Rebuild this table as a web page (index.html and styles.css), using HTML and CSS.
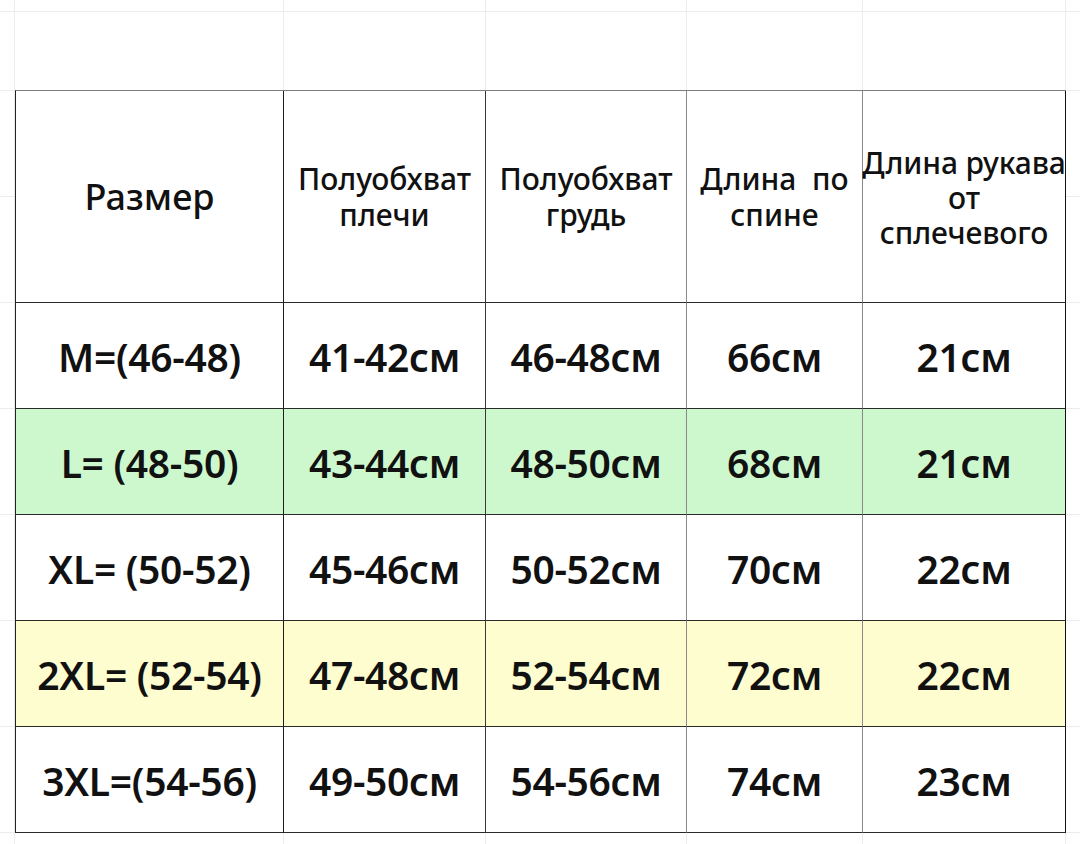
FILE: index.html
```html
<!DOCTYPE html>
<html lang="ru">
<head>
<meta charset="utf-8">
<title>Таблица размеров</title>
<link rel="stylesheet" href="styles.css">
</head>
<body>
<div class="sheet">
  <div class="size-table" role="table">
    <div class="cell head c1" role="columnheader"><span class="head-main">Размер</span></div>
    <div class="cell head c2" role="columnheader"><span>Полуобхват<br>плечи</span></div>
    <div class="cell head c3" role="columnheader"><span>Полуобхват<br>грудь</span></div>
    <div class="cell head c4" role="columnheader"><span>Длина&nbsp; по<br>спине</span></div>
    <div class="cell head c5" role="columnheader"><span class="head-tight">Длина рукава<br>от<br>сплечевого</span></div>

    <div class="cell c1">M=(46-48)</div>
    <div class="cell c2">41-42см</div>
    <div class="cell c3">46-48см</div>
    <div class="cell c4">66см</div>
    <div class="cell c5">21см</div>

    <div class="cell c1 green">L= (48-50)</div>
    <div class="cell c2 green">43-44см</div>
    <div class="cell c3 green">48-50см</div>
    <div class="cell c4 green">68см</div>
    <div class="cell c5 green">21см</div>

    <div class="cell c1">XL= (50-52)</div>
    <div class="cell c2">45-46см</div>
    <div class="cell c3">50-52см</div>
    <div class="cell c4">70см</div>
    <div class="cell c5">22см</div>

    <div class="cell c1 yellow">2XL= (52-54)</div>
    <div class="cell c2 yellow">47-48см</div>
    <div class="cell c3 yellow">52-54см</div>
    <div class="cell c4 yellow">72см</div>
    <div class="cell c5 yellow">22см</div>

    <div class="cell c1">3XL=(54-56)</div>
    <div class="cell c2">49-50см</div>
    <div class="cell c3">54-56см</div>
    <div class="cell c4">74см</div>
    <div class="cell c5">23см</div>
  </div>
</div>
</body>
</html>
```
FILE: styles.css
```css
html, body {
  margin: 0;
  padding: 0;
}

body {
  width: 1080px;
  height: 844px;
  overflow: hidden;
  background-color: #ffffff;
  background-image:
    linear-gradient(#ececec, #ececec),
    linear-gradient(#ececec 0 1px, transparent 1px),
    linear-gradient(#ececec, #ececec),
    linear-gradient(#ececec, #ececec),
    linear-gradient(#ececec, #ececec),
    linear-gradient(#ececec, #ececec),
    linear-gradient(#ececec, #ececec),
    linear-gradient(#ececec, #ececec);
  background-size:
    100% 1px,
    100% 106px,
    1px 100%, 1px 100%, 1px 100%, 1px 100%, 1px 100%, 1px 100%;
  background-position:
    0 11px,
    0 90px,
    14px 0, 283px 0, 485px 0, 686px 0, 862px 0, 1065px 0;
  background-repeat:
    no-repeat,
    repeat-y,
    no-repeat, no-repeat, no-repeat, no-repeat, no-repeat, no-repeat;
  font-family: "Noto Sans", "DejaVu Sans", sans-serif;
  color: #111111;
}

.sheet {
  padding: 90px 0 0 15px;
}

.size-table {
  display: grid;
  grid-template-columns: 268px 202px 201px 176px 203px;
  grid-template-rows: 212px repeat(5, 106px);
  width: max-content;
  border-top: 1px solid #7d7d7d;
  border-left: 1px solid #222222;
  background: #ffffff;
}

.cell {
  box-sizing: border-box;
  display: flex;
  align-items: center;
  justify-content: center;
  text-align: center;
  border-right: 1px solid #1e1e1e;
  border-bottom: 1px solid #2a2a2a;
  font-size: 39px;
  font-weight: 600;
  letter-spacing: -0.3px;
  white-space: nowrap;
  padding-top: 2px;
}

.cell.c2 {
  border-right-color: #3a3a3a;
}

.cell.c3,
.cell.c4 {
  border-right-color: #8a8a8a;
}

.cell.c5 {
  border-right-color: #111111;
}

.head {
  font-size: 30px;
  font-weight: 500;
  line-height: 36px;
  letter-spacing: 0;
  padding-top: 0;
}

.head-main {
  font-size: 36px;
  line-height: 44px;
}

.head-tight {
  font-size: 30px;
  line-height: 35px;
  letter-spacing: -0.1px;
  padding-top: 2px;
}

.green {
  background: #cdf8cd;
}

.yellow {
  background: #fefdcf;
}
```
